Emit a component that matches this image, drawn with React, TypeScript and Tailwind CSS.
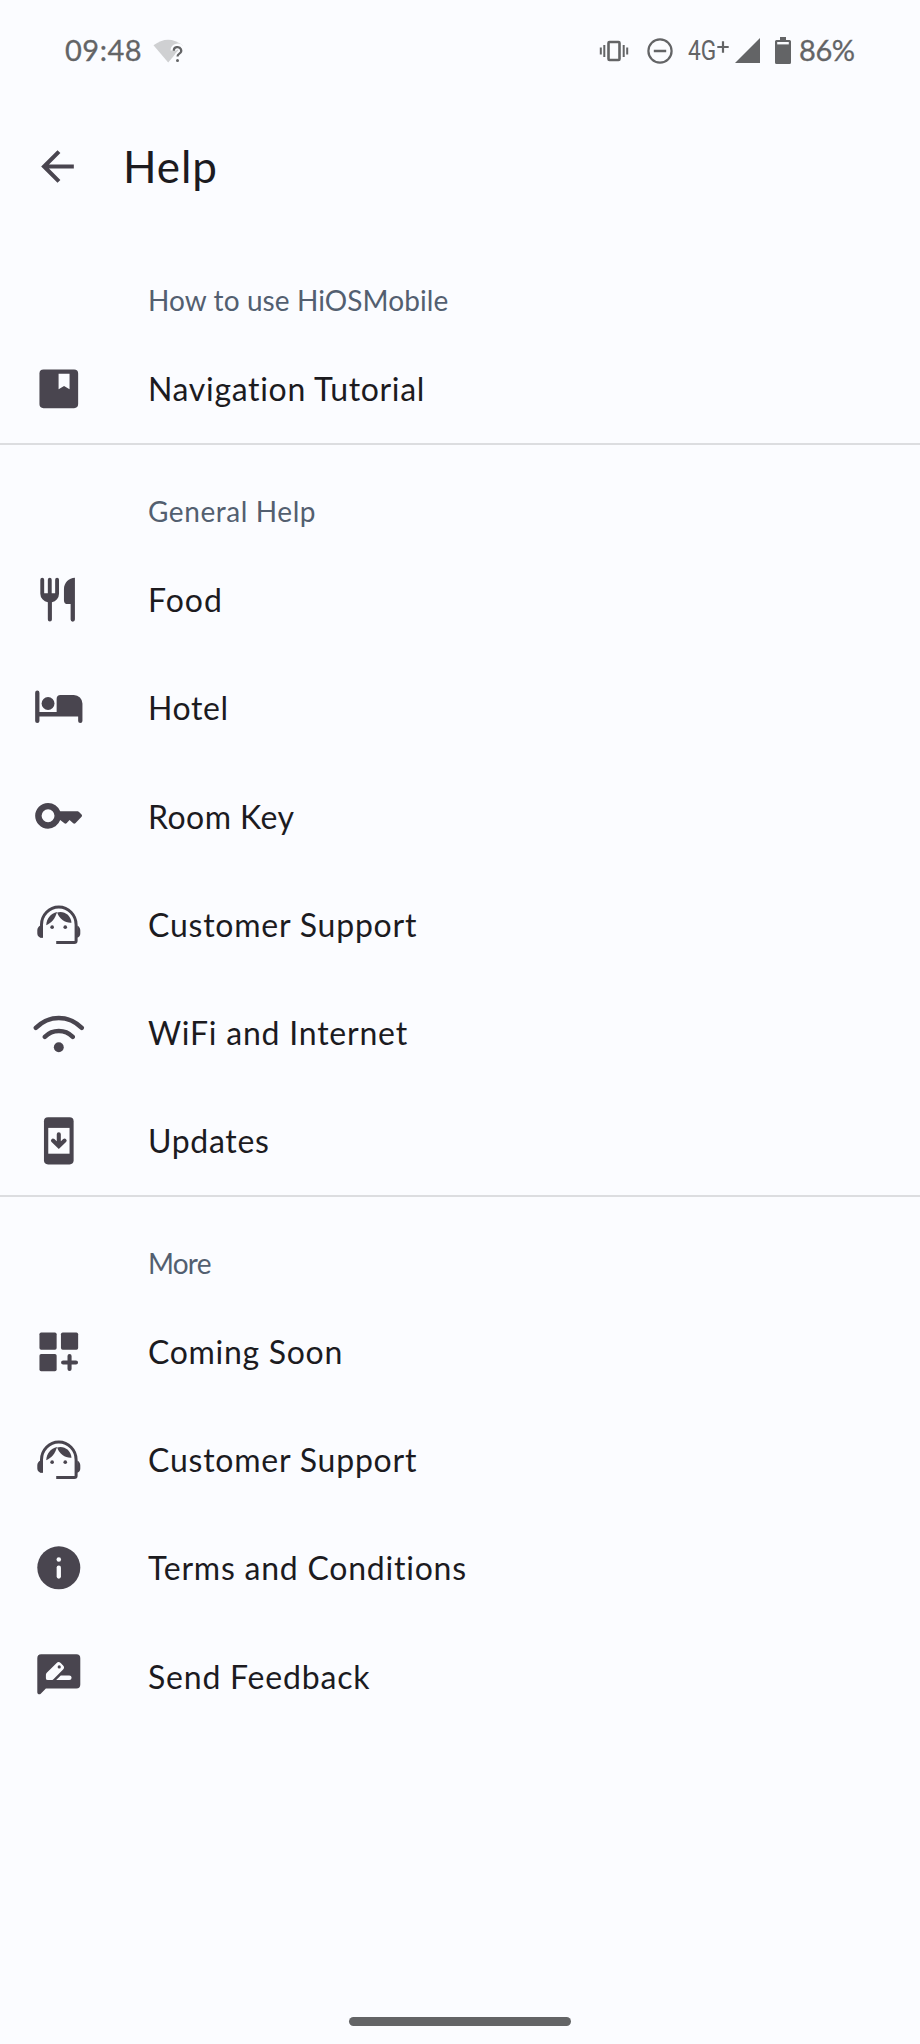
import type { ReactNode } from "react";

function Icon({ children }: { children: ReactNode }) {
  return (
    <svg viewBox="0 0 24 24" className="h-[51.6px] w-[51.6px] shrink-0 text-[#49454f]" fill="currentColor">
      {children}
    </svg>
  );
}

const paper = "#fbfcff";

const BookIcon = () => (
  <Icon>
    <rect x="3" y="3" width="18" height="18" rx="1.9" />
    <path d="M11.9 5H17v7.2l-2.55-1.5-2.55 1.5z" fill={paper} />
  </Icon>
);
const FoodIcon = () => (
  <Icon>
    <path d="M3.4 2.7a.9.9 0 0 1 1.8 0V9h1.7V2.7a.9.9 0 0 1 1.8 0V9h1.6V2.7a.9.9 0 0 1 1.8 0V9.2a4 4 0 0 1-3.3 3.9v8.1a.95.95 0 0 1-1.9 0v-8.1A4 4 0 0 1 3.4 9.2z" />
    <path d="M19.5 1.8v19.4a1 1 0 0 1-2 0V14h-1.3a1.8 1.8 0 0 1-1.8-1.8V7c0-2.8 2.3-5.2 5.1-5.2z" />
  </Icon>
);
const HotelIcon = () => (
  <Icon>
    <circle cx="7" cy="10" r="3" />
    <path d="M1 5a1 1 0 0 1 2 0v9h8V7.8A1.8 1.8 0 0 1 12.8 6H19a4 4 0 0 1 4 4v8.1a1 1 0 0 1-2 0V16H3v2.1a1 1 0 0 1-2 0z" />
  </Icon>
);
const KeyIcon = () => (
  <Icon>
    <path d="M20.8 9.9h-8.15A5.99 5.99 0 0 0 7 6c-3.31 0-6 2.69-6 6s2.69 6 6 6a5.99 5.99 0 0 0 5.65-4l1.95 1.5q.5.4 1 0L17 14l1.7 1.5q.5.4 1 0l2.9-3q.5-.5 0-1.1l-1.2-1.2q-.3-.3-.6-.3zM7 15a3 3 0 1 1 0-6 3 3 0 0 1 0 6z" />
  </Icon>
);
const SupportIcon = () => (
  <Icon>
    <path d="M3.95 17.9V12a8.05 8.25 0 0 1 16.1 0v7.4a.85.85 0 0 1-.85.85h-8.4" fill="none" stroke="currentColor" strokeWidth="1.4" />
    <path d="M3.4 12.3h1.2V18H4a2 2 0 0 1-2-2v-1.5c0-1 .6-1.8 1.4-2.2zM20.6 12.3c.8.4 1.4 1.2 1.4 2.2V16a2 2 0 0 1-1.6 2z" />
    <path d="M11.2 6.1C8.2 6.7 6.3 9.3 6.15 12.2 8.7 11.3 10.3 9 11.2 6.1z" />
    <path d="M11.2 6.3c3-1 6.4 1 6.7 4.7-2.8.2-5.6-1.5-6.7-4.7z" />
    <circle cx="8.9" cy="13.1" r=".85" />
    <circle cx="15" cy="13.1" r=".85" />
  </Icon>
);
const WifiIcon = () => (
  <Icon>
    <path d="M1.3 9.7C4.1 6.9 7.9 5.1 12 5.1s7.9 1.8 10.7 4.6M5.5 13.9C7.2 12.2 9.5 11.2 12 11.2s4.8 1 6.5 2.7" fill="none" stroke="currentColor" strokeWidth="2.05" strokeLinecap="round" />
    <circle cx="12" cy="18.7" r="2.3" />
  </Icon>
);
const UpdateIcon = () => (
  <Icon>
    <rect x="5.1" y="1" width="13.8" height="22" rx="1.9" />
    <path d="M7.1 6H17v12H7.1z" fill={paper} />
    <path d="M12 9v5.3M9.3 11.9l2.7 2.6 2.7-2.6" fill="none" stroke="currentColor" strokeWidth="1.9" strokeLinecap="round" />
  </Icon>
);
const AppsIcon = () => (
  <Icon>
    <rect x="3" y="3" width="8" height="8" rx=".8" />
    <rect x="13" y="3" width="8" height="8" rx=".8" />
    <rect x="3" y="13" width="8" height="8" rx=".8" />
    <path d="M17 14v6M14 17h6" fill="none" stroke="currentColor" strokeWidth="1.9" strokeLinecap="round" />
  </Icon>
);
const InfoIcon = () => (
  <Icon>
    <circle cx="12" cy="12" r="10" />
    <circle cx="12" cy="8.1" r="1.05" fill={paper} />
    <rect x="11" y="10.9" width="2" height="6.2" rx="1" fill={paper} />
  </Icon>
);
const FeedbackIcon = () => (
  <Icon>
    <path d="M3.8 2h16.4A1.8 1.8 0 0 1 22 3.8v12.3a1.8 1.8 0 0 1-1.8 1.8H6L3.6 20.3c-.6.6-1.6.2-1.6-.7V3.8A1.8 1.8 0 0 1 3.8 2z" />
    <path d="M6 11.5q0-.5.4-.9l4.6-4.6q.9-.8 1.9.1l1.1 1.1q.9.9 0 1.9l-4.5 4.5q-.4.4-.9.4H6.9A.9.9 0 0 1 6 13.1z" fill={paper} />
    <circle cx="12.2" cy="7.9" r=".75" />
    <path d="M10.8 14l2.1-2.1h4a1.05 1.05 0 0 1 0 2.1z" fill={paper} />
  </Icon>
);

type Item = { icon: ReactNode; label: string; track: string };

const sections: { title: string; track: string; items: Item[] }[] = [
  {
    title: "How to use HiOSMobile",
    track: "tracking-[0.1px]",
    items: [{ icon: <BookIcon />, label: "Navigation Tutorial", track: "tracking-[0.68px]" }],
  },
  {
    title: "General Help",
    track: "tracking-[0.58px]",
    items: [
      { icon: <FoodIcon />, label: "Food", track: "tracking-[1px]" },
      { icon: <HotelIcon />, label: "Hotel", track: "tracking-[0.6px]" },
      { icon: <KeyIcon />, label: "Room Key", track: "tracking-[0.45px]" },
      { icon: <SupportIcon />, label: "Customer Support", track: "tracking-[0.78px]" },
      { icon: <WifiIcon />, label: "WiFi and Internet", track: "tracking-[0.78px]" },
      { icon: <UpdateIcon />, label: "Updates", track: "tracking-[0.68px]" },
    ],
  },
  {
    title: "More",
    track: "tracking-[-0.8px]",
    items: [
      { icon: <AppsIcon />, label: "Coming Soon", track: "tracking-[0.7px]" },
      { icon: <SupportIcon />, label: "Customer Support", track: "tracking-[0.78px]" },
      { icon: <InfoIcon />, label: "Terms and Conditions", track: "tracking-[0.77px]" },
      { icon: <FeedbackIcon />, label: "Send Feedback", track: "tracking-[0.8px]" },
    ],
  },
];

function StatusBar() {
  return (
    <div className="flex h-[101px] items-center pl-[65px] pr-[64px] text-[#636466]">
      <span className="mb-[2px] w-[88px] whitespace-nowrap text-[29px] leading-none tracking-[0.5px] [-webkit-text-stroke:0.3px_#636466]">
        09:48
      </span>
      <svg viewBox="0 0 31 26" className="h-[26px] w-[31px]">
        <path d="M.5 7.3Q15 -4 29.8 7.3L15.2 24.5z" fill="#cfd0d2" />
        <path d="M20.5 12.5a4 3.8 0 1 1 6 3.2q-2 1.3-2 2.8" fill="none" stroke={paper} strokeWidth="6" />
        <path d="M20.8 12.8a3.7 3.5 0 1 1 5.6 2.8q-1.9 1.2-1.9 3" fill="none" stroke="#636466" strokeWidth="2.2" />
        <circle cx="24.5" cy="22.5" r="1.5" fill="#636466" />
      </svg>
      <div className="grow" />
      <svg viewBox="0 0 30 22" className="h-[22px] w-[30px]" fill="none" stroke="currentColor" strokeWidth="2">
        <rect x="9.5" y="2" width="11" height="18" rx="1" strokeWidth="2.6" />
        <path d="M1.8 7.5v7M5.3 5v12M24.7 5v12M28.2 7.5v7" />
      </svg>
      <svg viewBox="0 0 26 26" className="ml-[18px] h-[26px] w-[26px]" fill="none" stroke="currentColor" strokeWidth="2.2">
        <circle cx="13" cy="13" r="11.6" />
        <path d="M6.8 13h12.4" strokeWidth="2.5" />
      </svg>
      <span className="ml-[15px] flex w-[47px] items-start whitespace-nowrap font-['Roboto',sans-serif] text-[28px] leading-[28px]">
        <span className="w-[29px] origin-left scale-x-[0.81]">4G</span>
        <svg viewBox="0 0 12 12" className="mt-[4px] h-[12px] w-[12px]" stroke="currentColor" strokeWidth="2.2">
          <path d="M6 .3v11.4M.3 6h11.4" />
        </svg>
      </span>
      <svg viewBox="0 0 25 25" className="h-[25px] w-[25px]" fill="currentColor">
        <path d="M25 0v25H0z" />
      </svg>
      <svg viewBox="0 0 16 27" className="ml-[15px] h-[27px] w-[16px]" fill="currentColor">
        <path d="M5 0h6v3h3.5A1.5 1.5 0 0 1 16 4.5v21a1.5 1.5 0 0 1-1.5 1.5h-13A1.5 1.5 0 0 1 0 25.5v-21A1.5 1.5 0 0 1 1.5 3H5z" />
        <path d="M2.2 5h11.6v2.4H2.200z" fill={paper} />
      </svg>
      <span className="mb-[2px] ml-[8px] w-[57px] whitespace-nowrap text-[29px] leading-none tracking-[-0.4px] [-webkit-text-stroke:0.3px_#636466]">
        86%
      </span>
    </div>
  );
}

export default function App() {
  return (
    <div className="flex h-[2044px] w-[920px] flex-col overflow-hidden bg-[#fbfcff] font-['Lato',sans-serif] text-[#1c1b1f]">
      <StatusBar />
      <header className="flex h-[133.3px] items-start pl-[33px] pt-[41px]">
        <svg viewBox="0 0 24 24" className="h-[49px] w-[49px] text-[#49454f]" fill="currentColor">
          <path d="M20 11H7.83l5.59-5.59L12 4l-8 8 8 8 1.41-1.41L7.83 13H20v-2z" />
        </svg>
        <h1 className="ml-[41px] whitespace-nowrap text-[44px] leading-[49px] tracking-[0.9px]">Help</h1>
      </header>
      <main className="flex flex-col">
        {sections.map((section, i) => (
          <section key={section.title} className={i < 2 ? "border-b-2 border-[#dcdde0]" : ""}>
            <h2 className="flex h-[100.6px] items-center pl-[148px] pt-[31px] text-[28px] leading-none text-[#535f70]">
              <span className={`whitespace-nowrap ${section.track}`}>{section.title}</span>
            </h2>
            <ul>
              {section.items.map((item) => (
                <li key={item.label} className="flex h-[108.2px] items-center pl-[33px]">
                  {item.icon}
                  <span className={`ml-[63.4px] whitespace-nowrap pt-px text-[32px] leading-none ${item.track}`}>
                    {item.label}
                  </span>
                </li>
              ))}
            </ul>
          </section>
        ))}
      </main>
      <div className="mx-auto mb-[18px] mt-auto h-[9px] w-[222px] shrink-0 rounded-full bg-[#636466]" />
    </div>
  );
}
